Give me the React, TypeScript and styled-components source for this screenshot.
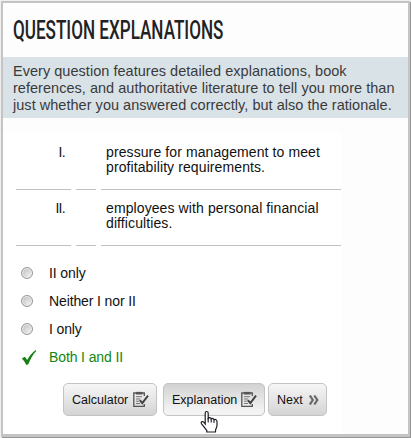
import React from "react";
import styled, { createGlobalStyle } from "styled-components";

const Global = createGlobalStyle`
  body { margin: 0; background: #eeeeee; font-family: "Liberation Sans", Arial, sans-serif; }
  * { box-sizing: border-box; }
`;

const Page = styled.div`
  width: 411px;
  height: 438px;
  padding: 1px 1px 1px 1px;
  overflow: hidden;
  background: #efefef;
`;

const Frame = styled.main`
  width: 409px;
  height: 436px;
  border: 2px solid #c4c4c4;
  border-bottom-width: 3px;
  box-shadow: 1px 1px 0 #969696;
  background: #fdfdfd;
  position: relative;
`;

const Title = styled.h1`
  margin: 0;
  height: 54px;
  padding: 9px 0 0 10px;
  font: 500 26px/36px Roboto, sans-serif;
  color: #222;
  white-space: nowrap;
  transform: scaleX(0.657);
  transform-origin: 10px 0;
`;

const Intro = styled.p`
  margin: 0;
  height: 61px;
  padding: 6px 0 0 10px;
  background: #d9e3e7;
  color: #3a3a3c;
  font-size: 14.5px;
  line-height: 17px;
  letter-spacing: 0.03px;
  white-space: pre;
`;

const Quiz = styled.section`
  width: 338px;
  height: 301px;
  margin-top: 15px;
  background: #fff;
`;

const Statement = styled.div`
  display: grid;
  grid-template-columns: 55px 20px 240px;
  column-gap: 5px;
  height: 56px;
  margin-left: 13px;
  font-size: 14px;
  line-height: 15px;
  letter-spacing: 0.1px;
  color: #111;
  white-space: pre;
`;

const Cell = styled.div<{ $numeral?: boolean }>`
  border-bottom: 1px solid #c1c1c1;
  padding: 11px ${p => (p.$numeral ? "6px" : "0")} 0 ${p => (p.$numeral ? "0" : "5px")};
  text-align: ${p => (p.$numeral ? "right" : "left")};
  letter-spacing: ${p => (p.$numeral ? "-0.7px" : "inherit")};
`;

const Statements = styled.div`
  padding-top: 1px;
`;

const Answers = styled.div`
  padding-top: 13px;
`;

const Answer = styled.div<{ $correct?: boolean }>`
  display: flex;
  align-items: center;
  height: 28px;
  padding-left: 18px;
  font-size: 14px;
  letter-spacing: -0.12px;
  color: ${p => (p.$correct ? "#128612" : "#111")};
`;

const Mark = styled.span`
  display: flex;
  width: 28px;
`;

const Radio = styled.span`
  width: 12px;
  height: 12px;
  border: 1px solid #969696;
  border-radius: 50%;
  box-shadow: inset 0 0 0 1px #f4f4f4;
  background: radial-gradient(circle at 65% 70%, #ececec, #b4b4b4);
`;

const Actions = styled.div`
  display: flex;
  margin: 12px 0 0 60px;
`;

const Button = styled.button<{ $w: number; $gap: number; $hover?: boolean }>`
  display: flex;
  align-items: center;
  width: ${p => p.$w}px;
  height: 33px;
  margin-right: ${p => p.$gap}px;
  padding: 0 0 0 8px;
  border: 1px solid #c3c3c3;
  border-radius: 5px;
  background: ${p => (p.$hover ? "linear-gradient(#d2d2d2, #f3f3f3 85%)" : "linear-gradient(#f6f6f6, #d4d4d4)")};
  color: #111;
  font: 12.5px "Liberation Sans", Arial, sans-serif;
`;

const ButtonIcon = styled.svg`
  margin-left: auto;
  margin-right: 7px;
`;

const Pointer = styled.svg`
  position: absolute;
  left: 197px;
  top: 407px;
`;

const ClipboardIcon = () => (
  <ButtonIcon width="16" height="17" viewBox="0 0 16 17" fill="none" stroke="#555">
    <path d="M11.3 13v2.3H.8V2h10.5v3" strokeWidth="1.3" />
    <path d="M3 2.2h6.5" strokeWidth="2.6" />
    <path d="M3 5.7h6M3 8h4M3 10.2h3M3 12.5h4" stroke="#777" />
    <path d="M6.8 9.2l2.5 3L15 4.7" stroke="#444" strokeWidth="2" />
  </ButtonIcon>
);

const ChevronsIcon = () => (
  <ButtonIcon width="10" height="10" viewBox="0 0 10 10" fill="none" stroke="#686868" strokeWidth="2.2">
    <path d="M.9.5L3.8 5 .9 9.5M5.3.5l3 4.5-3 4.5" />
  </ButtonIcon>
);

const CheckIcon = () => (
  <svg width="17" height="18" viewBox="0 0 17 18">
    <path d="M.8 10.4L3.9 8.7 6.2 11.9C8.5 8 11 5 14.6 2.1L15.2 3C11.6 7 9.3 11.2 7.3 16.3L5.3 17C4.2 14.2 2.8 12.3.8 10.4Z" fill="#168016" />
  </svg>
);

const HandPointer = () => (
  <Pointer width="19" height="24" viewBox="0 0 19 24">
    <path
      d="M5.2 14V3.3c0-2.4 3-2.4 3 0v5c.7-1 2.6-.8 3 .6.8-.8 2.5-.4 2.8.8 1.3-.7 3 .1 3 1.7v4.2c0 2-1.5 3.3-1.5 5.1V22H6.8v-1.5C5.2 18.7 3.4 16 1.6 13.8c-1.3-1.7.8-3 2.2-1.6z"
      fill="#fff" stroke="#1c1c26" strokeWidth="1.2"
    />
    <path d="M8.2 8v4.5M11.2 9v3.5M14 10v3" stroke="#1c1c26" strokeWidth="1.1" />
  </Pointer>
);

const statements = [
  ["I.", "pressure for management to meet\nprofitability requirements."],
  ["II.", "employees with personal financial\ndifficulties."],
];

export default function App() {
  return (
    <Page>
      <Global />
      <Frame>
        <Title>QUESTION EXPLANATIONS</Title>
        <Intro>{"Every question features detailed explanations, book\nreferences, and authoritative literature to tell you more than\njust whether you answered correctly, but also the rationale."}</Intro>
        <Quiz>
          <Statements>
            {statements.map(([numeral, text]) => (
              <Statement key={numeral}>
                <Cell $numeral>{numeral}</Cell>
                <Cell />
                <Cell>{text}</Cell>
              </Statement>
            ))}
          </Statements>
          <Answers>
            {["II only", "Neither I nor II", "I only"].map(label => (
              <Answer key={label}><Mark><Radio /></Mark>{label}</Answer>
            ))}
            <Answer $correct><Mark><CheckIcon /></Mark>Both I and II</Answer>
          </Answers>
          <Actions>
            <Button $w={94} $gap={6}>Calculator<ClipboardIcon /></Button>
            <Button $w={102} $gap={3} $hover>Explanation<ClipboardIcon /></Button>
            <Button $w={59} $gap={0}>Next<ChevronsIcon /></Button>
          </Actions>
        </Quiz>
        <HandPointer />
      </Frame>
    </Page>
  );
}
